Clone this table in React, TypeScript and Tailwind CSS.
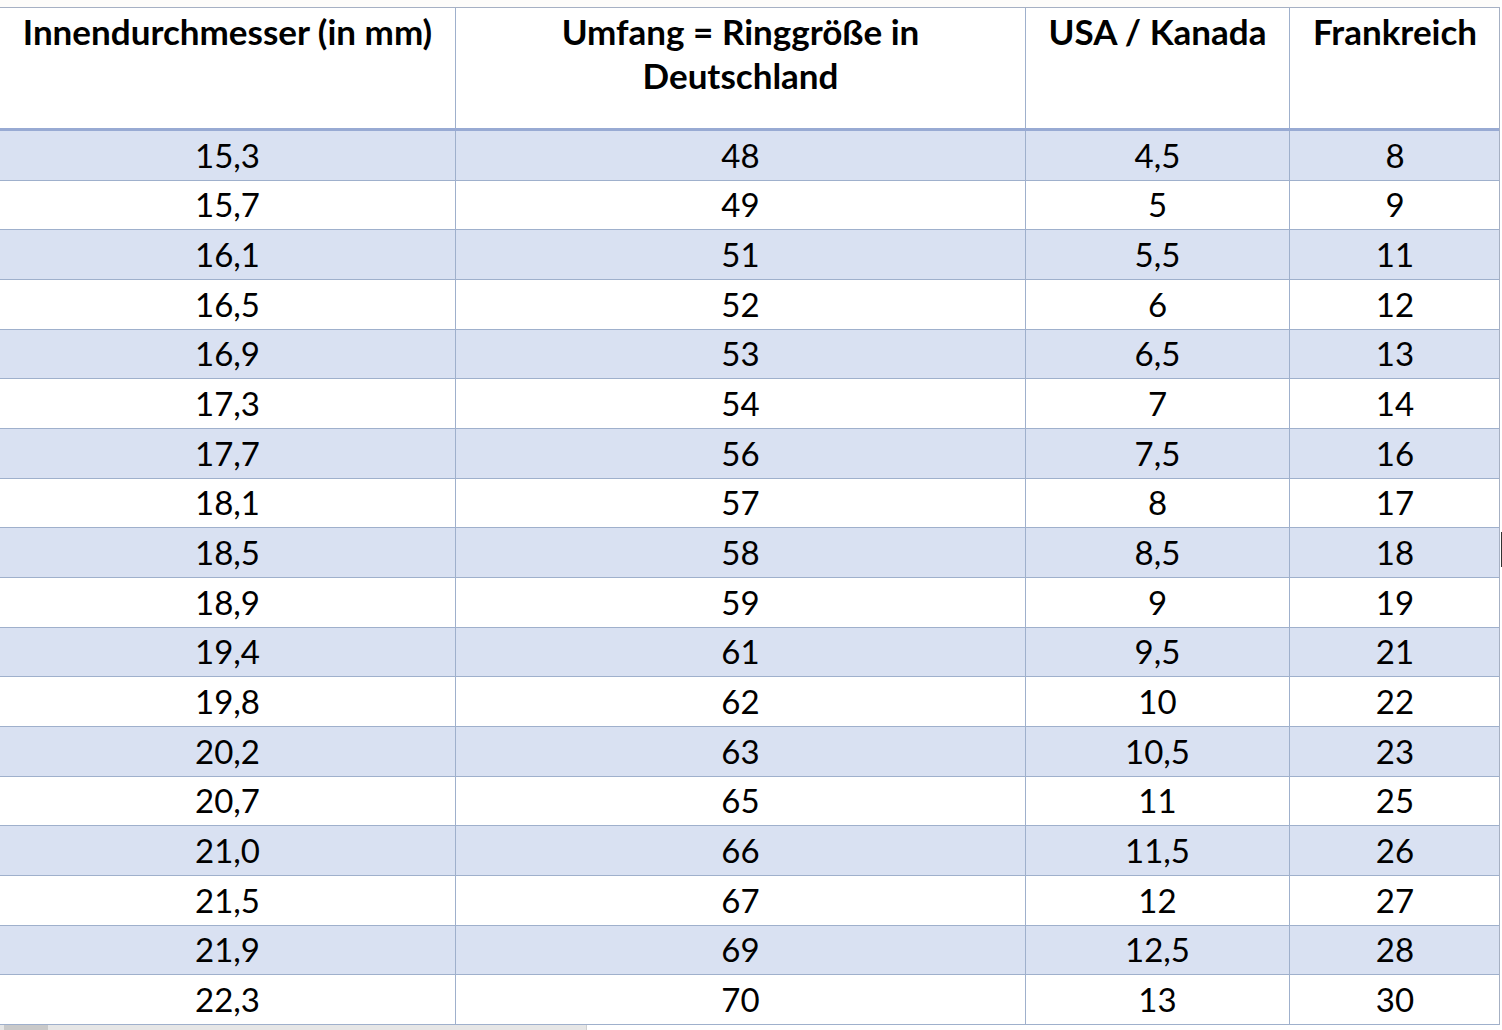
const rows: [string, string, string, string][] = [
  ["15,3", "48", "4,5", "8"],
  ["15,7", "49", "5", "9"],
  ["16,1", "51", "5,5", "11"],
  ["16,5", "52", "6", "12"],
  ["16,9", "53", "6,5", "13"],
  ["17,3", "54", "7", "14"],
  ["17,7", "56", "7,5", "16"],
  ["18,1", "57", "8", "17"],
  ["18,5", "58", "8,5", "18"],
  ["18,9", "59", "9", "19"],
  ["19,4", "61", "9,5", "21"],
  ["19,8", "62", "10", "22"],
  ["20,2", "63", "10,5", "23"],
  ["20,7", "65", "11", "25"],
  ["21,0", "66", "11,5", "26"],
  ["21,5", "67", "12", "27"],
  ["21,9", "69", "12,5", "28"],
  ["22,3", "70", "13", "30"],
];

const cols = "grid grid-cols-[456px_570px_264px_210px]";

export default function App() {
  return (
    <div className="w-[1502px] h-[1030px] overflow-hidden bg-[#fdfcfa] font-['Lato',sans-serif] text-black">
      <div className="flex">
        <div className="w-[1500px] pt-[7px]">
          <div className="border-t border-r border-[#a6b0c3] bg-white">
            {/* header */}
            <div className={`${cols} h-[123px] border-b-[3px] border-[#98aad3] text-[35px] font-bold leading-[44px] text-center`}>
              <div className="border-r border-[#9fb0cc] pt-[1px]">Innendurchmesser (in mm)</div>
              <div className="border-r border-[#9fb0cc] pt-[1px]">
                Umfang = Ringgröße in
                <br />
                Deutschland
              </div>
              <div className="border-r border-[#9fb0cc] pt-[1px]">USA / Kanada</div>
              <div className="pt-[1px]">Frankreich</div>
            </div>

            {/* body */}
            {rows.map((r, i) => (
              <div
                key={i}
                className={`${cols} h-[49.67px] border-b border-[#9fb0cc] text-[33px] leading-none text-center ${
                  i % 2 === 0 ? "bg-[#d9e1f2]" : "bg-white"
                }`}
              >
                {r.map((v, j) => (
                  <div
                    key={j}
                    className={`flex items-center justify-center ${j < 3 ? "border-r border-[#9fb0cc]" : ""}`}
                  >
                    {v}
                  </div>
                ))}
              </div>
            ))}
          </div>

          {/* scrollbar strip */}
          <div className="flex h-[5px]">
            <div className="w-[586px] bg-[#e6e6e6] flex pl-[4px]">
              <div className="w-[44px] bg-[#c9c9c9]" />
            </div>
            <div className="flex-1 bg-white border-l border-[#d0d0d0]" />
          </div>
        </div>
        <div className="w-[2px] bg-white pt-[532px] pl-[1px]">
          <div className="w-px h-[35px] bg-[#333]" />
        </div>
      </div>
    </div>
  );
}
